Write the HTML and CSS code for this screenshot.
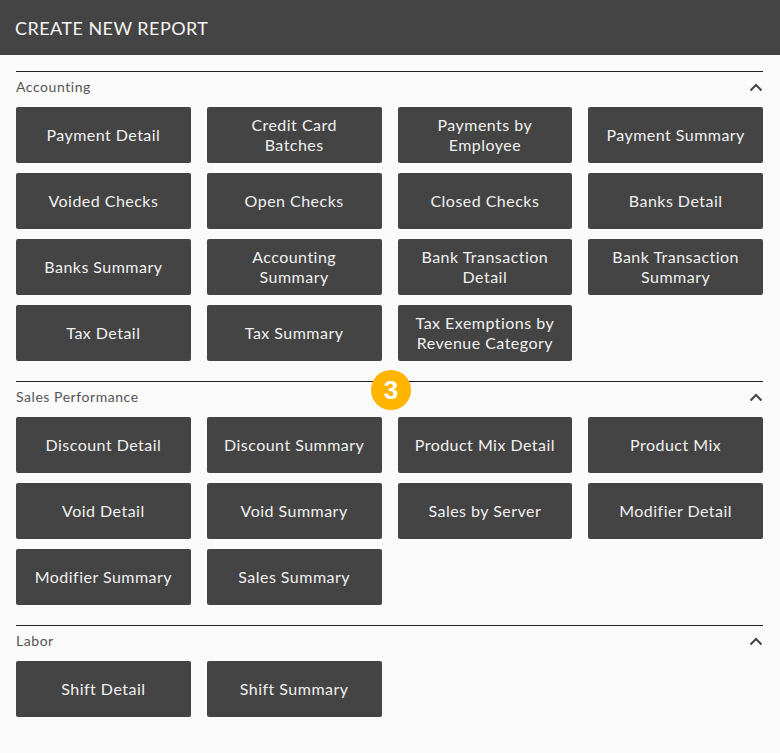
FILE: index.html
```html
<!DOCTYPE html>
<html lang="en">
<head>
<meta charset="utf-8">
<title>Create New Report</title>
<link rel="stylesheet" href="styles.css">
</head>
<body>
<header class="header"><h1 class="title">CREATE NEW REPORT</h1></header>
<main class="content">
  <section class="section">
    <div class="section-head"><h2 class="section-title">Accounting</h2>
      <svg class="chevron" viewBox="0 0 14 9" aria-hidden="true"><path d="M1.5 7.5 7 2l5.500 5.500"/></svg></div>
    <div class="grid">
      <button class="report">Payment Detail</button>
      <button class="report">Credit Card Batches</button>
      <button class="report">Payments by Employee</button>
      <button class="report">Payment Summary</button>
      <button class="report">Voided Checks</button>
      <button class="report">Open Checks</button>
      <button class="report">Closed Checks</button>
      <button class="report">Banks Detail</button>
      <button class="report">Banks Summary</button>
      <button class="report">Accounting Summary</button>
      <button class="report">Bank Transaction Detail</button>
      <button class="report">Bank Transaction Summary</button>
      <button class="report">Tax Detail</button>
      <button class="report">Tax Summary</button>
      <button class="report">Tax Exemptions by Revenue Category</button>
    </div>
  </section>
  <section class="section">
    <span class="badge">3</span>
    <div class="section-head"><h2 class="section-title">Sales Performance</h2>
      <svg class="chevron" viewBox="0 0 14 9" aria-hidden="true"><path d="M1.5 7.5 7 2l5.500 5.500"/></svg></div>
    <div class="grid">
      <button class="report">Discount Detail</button>
      <button class="report">Discount Summary</button>
      <button class="report">Product Mix Detail</button>
      <button class="report">Product Mix</button>
      <button class="report">Void Detail</button>
      <button class="report">Void Summary</button>
      <button class="report">Sales by Server</button>
      <button class="report">Modifier Detail</button>
      <button class="report">Modifier Summary</button>
      <button class="report">Sales Summary</button>
    </div>
  </section>
  <section class="section">
    <div class="section-head"><h2 class="section-title">Labor</h2>
      <svg class="chevron" viewBox="0 0 14 9" aria-hidden="true"><path d="M1.5 7.5 7 2l5.500 5.500"/></svg></div>
    <div class="grid">
      <button class="report">Shift Detail</button>
      <button class="report">Shift Summary</button>
    </div>
  </section>
</main>
</body>
</html>
```
FILE: styles.css
```css
* { box-sizing: border-box; }
html, body { margin: 0; padding: 0; height: 100%; overflow: hidden; }
body { background: #fafafa; font-family: Lato, "Open Sans", sans-serif; color: #444; }
.header { height: 55px; background: #444; display: flex; align-items: center; padding: 0 15px; }
.title { margin: 0; font-size: 18px; font-weight: 400; color: #f5f5f5; letter-spacing: 0.45px; }
.content { padding: 16px 17px 0 16px; display: flex; flex-direction: column; gap: 20px; }
.section { position: relative; border-top: 1px solid #222; }
.section-head { height: 35px; display: flex; justify-content: space-between; align-items: flex-start; padding-top: 6px; }
.section-title { margin: 0; font-size: 14px; line-height: 17px; font-weight: 400; color: #555; letter-spacing: 0.55px; }
.chevron { width: 14px; height: 9px; margin-top: 5px; fill: none; stroke: #444; stroke-width: 2; }
.grid { display: grid; grid-template-columns: repeat(4, 1fr); gap: 10px 16px; }
.report { height: 56px; padding: 0 16px; border: 0; border-radius: 2px; background: #444; color: #f0f0f0; font-family: inherit; font-size: 16px; line-height: 20px; letter-spacing: 0.47px; text-align: center; }
.badge { position: absolute; left: 355px; top: -12px; width: 40px; height: 40px; border-radius: 50%; background: #ffb400; color: #fff; font-family: "Liberation Sans", sans-serif; font-weight: 700; font-size: 26px; line-height: 40px; text-align: center; }
```
